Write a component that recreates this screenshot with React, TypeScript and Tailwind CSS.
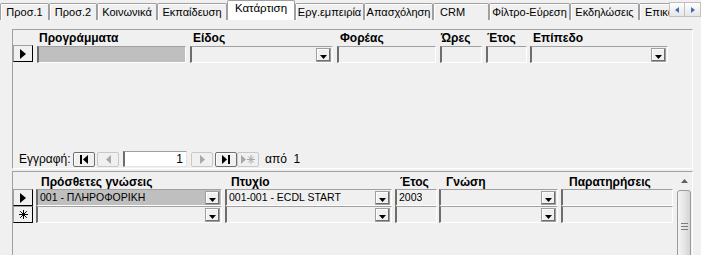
import React from "react";

const tabs = [
  { label: "Προσ.1", cls: "w-[49px]" },
  { label: "Προσ.2", cls: "w-[48px]" },
  { label: "Κοινωνικά", cls: "w-[60px]" },
  { label: "Εκπαίδευση", cls: "w-[70px]" },
  { label: "Κατάρτιση", cls: "w-[68px]", active: true },
  { label: "Εργ.εμπειρία", cls: "w-[69px]" },
  { label: "Απασχόληση", cls: "w-[69px]" },
  { label: "CRM", cls: "w-[56px] justify-start pl-[6px]" },
  { label: "Φίλτρο-Εύρεση", cls: "w-[81px]" },
  { label: "Εκδηλώσεις", cls: "w-[69px]" },
  { label: "Επικοινωνία", cls: "w-[72px] justify-start pl-[5px]" },
];

function Caret() {
  return (
    <svg width="7" height="4" viewBox="0 0 7 4" className="mt-[5px]">
      <path d="M0 0 H7 L3.5 4 Z" fill="#000" />
    </svg>
  );
}

function DropBtn() {
  return (
    <div className="ml-auto mr-[1px] flex h-[14px] w-[15px] shrink-0 items-center justify-center border border-[#a0a0a0] bg-[#f0f0f0] shadow-[inset_-1px_-1px_0_#6d6d6d,inset_1px_1px_0_#fff]">
      <Caret />
    </div>
  );
}

// sunken access text box
function Field({
  w,
  combo,
  selected,
  children,
}: {
  w: string;
  combo?: boolean;
  selected?: boolean;
  children?: React.ReactNode;
}) {
  return (
    <div
      className={`flex h-[17px] shrink-0 items-center border-t border-l-2 border-r border-b border-t-[#a0a0a0] border-l-[#6d6d6d] border-r-white border-b-white pl-[2px] text-[10.5px] leading-none ${w} ${
        selected ? "bg-[#bfbfbf]" : "bg-[#f0f0f0]"
      }`}
    >
      <span className="truncate">{children}</span>
      {combo && <DropBtn />}
    </div>
  );
}

function Selector({ kind }: { kind: "current" | "new" }) {
  return (
    <div className="flex h-[17px] w-[20px] shrink-0 items-center justify-center border-t border-l border-r border-b border-t-[#a0a0a0] border-l-[#a0a0a0] border-r-black border-b-black bg-[#f0f0f0]">
      {kind === "current" ? (
        <svg width="6" height="10" viewBox="0 0 6 10">
          <path d="M0 0 L6 5 L0 10 Z" fill="#000" />
        </svg>
      ) : (
        <svg width="9" height="9" viewBox="0 0 9 9" stroke="#000" strokeWidth="1">
          <path d="M4.5 0 V9 M0 4.5 H9 M1.2 1.2 L7.8 7.8 M7.8 1.2 L1.2 7.8" />
        </svg>
      )}
    </div>
  );
}

function NavBtn({ enabled, children }: { enabled?: boolean; children: React.ReactNode }) {
  return (
    <div
      className={`flex h-[15px] w-[22px] shrink-0 items-center justify-center rounded-[2px] border bg-[#f0f0f0] ${
        enabled ? "border-[#707070] shadow-[inset_1px_1px_0_#fff]" : "border-[#c8c8c8]"
      }`}
    >
      {children}
    </div>
  );
}

export default function App() {
  return (
    <div className="h-[255px] w-[701px] overflow-hidden bg-[#f0f0f0] font-['Liberation_Sans',Arial,sans-serif] text-[12px] text-black">
      {/* tab strip */}
      <div className="flex h-[20px] items-end">
        <div className="flex w-[669px] shrink-0 items-end overflow-hidden text-[11px]">
          {tabs.map((t) => (
            <div
              key={t.label}
              className={`flex shrink-0 items-center justify-center overflow-hidden whitespace-nowrap border-t border-l border-r rounded-t-[2px] ${t.cls} ${
                t.active
                  ? "h-[20px] border-t-[#a0a0a0] border-l-[#a0a0a0] border-r-[#a0a0a0] bg-white pb-[3px] text-[11.5px]"
                  : "h-[17px] border-t-[#a0a0a0] border-l-[#a0a0a0] border-r-[#a0a0a0] bg-[#f0f0f0] pt-[1px] shadow-[inset_1px_1px_0_#fff]"
              }`}
            >
              {t.label}
            </div>
          ))}
        </div>
        <div className="mb-[3px] flex shrink-0">
          <div className="flex h-[15px] w-[16px] items-center justify-center border border-[#c0c0c0] bg-gradient-to-b from-white to-[#e6e6e6]">
            <svg width="4" height="6" viewBox="0 0 4 6">
              <path d="M4 0 L0 3 L4 6 Z" fill="#3f6fb5" />
            </svg>
          </div>
          <div className="flex h-[15px] w-[16px] items-center justify-center border border-l-0 border-[#c0c0c0] bg-gradient-to-b from-white to-[#e6e6e6]">
            <svg width="4" height="6" viewBox="0 0 4 6">
              <path d="M0 0 L4 3 L0 6 Z" fill="#3f6fb5" />
            </svg>
          </div>
        </div>
      </div>

      {/* Προγράμματα subform */}
      <div className="ml-[12px] mt-[9px] flex h-[140px] w-[681px] flex-col border border-[#a0a0a0] border-r-white border-b-white">
        <div className="flex h-[15px] items-end pb-[1px] font-bold leading-none">
          <div className="w-[24px] shrink-0" />
          <div className="w-[153px] shrink-0 pl-[2px]">Προγράμματα</div>
          <div className="w-[147px] shrink-0 pl-[3px]">Είδος</div>
          <div className="w-[103px] shrink-0 pl-[3px]">Φορέας</div>
          <div className="w-[46px] shrink-0 pl-[1px]">Ώρες</div>
          <div className="w-[44px] shrink-0 pl-[1px]">Έτος</div>
          <div className="pl-[3px]">Επίπεδο</div>
        </div>
        <div className="flex items-start">
          <Selector kind="current" />
          <div className="ml-[4px] mt-[1px] flex gap-[4px]">
            <Field w="w-[149px]" selected />
            <Field w="w-[143px]" combo />
            <Field w="w-[99px]" />
            <Field w="w-[42px]" />
            <Field w="w-[41px]" />
            <div className="-ml-[1px]">
              <Field w="w-[138px]" combo />
            </div>
          </div>
        </div>
        <div className="flex-1" />
        {/* navigation buttons */}
        <div className="mb-[1px] flex h-[16px] items-center">
          <span className="ml-[6px] w-[54px] shrink-0">Εγγραφή:</span>
          <NavBtn enabled>
            <svg width="9" height="9" viewBox="0 0 9 9">
              <rect x="0" y="0" width="2" height="9" fill="#000" />
              <path d="M8 0 L3 4.5 L8 9 Z" fill="#000" />
            </svg>
          </NavBtn>
          <div className="ml-[2px]">
            <NavBtn>
              <svg width="5" height="9" viewBox="0 0 5 9">
                <path d="M5 0 L0 4.5 L5 9 Z" fill="#a8a8a8" />
              </svg>
            </NavBtn>
          </div>
          <div className="ml-[4px] flex h-[16px] w-[64px] items-center justify-end border-t border-l-2 border-r border-b border-t-[#a0a0a0] border-l-[#6d6d6d] border-r-[#e3e3e3] border-b-[#e3e3e3] bg-white pr-[3px] leading-none">
            1
          </div>
          <div className="ml-[4px]">
            <NavBtn>
              <svg width="5" height="9" viewBox="0 0 5 9">
                <path d="M0 0 L5 4.5 L0 9 Z" fill="#a8a8a8" />
              </svg>
            </NavBtn>
          </div>
          <div className="ml-[2px]">
            <NavBtn enabled>
              <svg width="9" height="9" viewBox="0 0 9 9">
                <path d="M0 0 L5 4.5 L0 9 Z" fill="#000" />
                <rect x="6" y="0" width="2" height="9" fill="#000" />
              </svg>
            </NavBtn>
          </div>
          <NavBtn>
            <svg width="14" height="9" viewBox="0 0 14 9">
              <path d="M0 0 L5 4.5 L0 9 Z" fill="#a8a8a8" />
              <path d="M10 0 V9 M6 4.5 H14 M7.3 1.5 L12.7 7.5 M12.7 1.5 L7.3 7.5" stroke="#a8a8a8" strokeWidth="1" />
            </svg>
          </NavBtn>
          <span className="ml-[6px]">από&nbsp; 1</span>
        </div>
      </div>

      {/* Πρόσθετες γνώσεις subform */}
      <div className="ml-[12px] mt-[2px] flex h-[90px] w-[681px] border border-[#a0a0a0] border-r-white">
        <div className="w-[663px] shrink-0">
          <div className="flex h-[17px] items-end pb-[1px] font-bold leading-none">
            <div className="w-[27px] shrink-0" />
            <div className="w-[189px] shrink-0 pl-[1px]">Πρόσθετες γνώσεις</div>
            <div className="w-[170px] shrink-0 pl-[2px]">Πτυχίο</div>
            <div className="w-[44px] shrink-0 pl-[1px]">Έτος</div>
            <div className="w-[122px] shrink-0 pl-[3px]">Γνώση</div>
            <div className="pl-[4px]">Παρατηρήσεις</div>
          </div>
          <div className="flex items-start">
            <Selector kind="current" />
            <div className="ml-[3px] flex">
              <Field w="w-[186px]" combo selected>
                001 - ΠΛΗΡΟΦΟΡΙΚΗ
              </Field>
              <div className="ml-[3px]">
                <Field w="w-[167px]" combo>
                  001-001 - ECDL START
                </Field>
              </div>
              <div className="ml-[3px]">
                <Field w="w-[42px]">2003</Field>
              </div>
              <div className="ml-[2px]">
                <Field w="w-[119px]" combo />
              </div>
              <div className="ml-[3px]">
                <Field w="w-[112px]" />
              </div>
            </div>
          </div>
          <div className="flex items-start">
            <Selector kind="new" />
            <div className="ml-[3px] flex">
              <Field w="w-[186px]" combo />
              <div className="ml-[3px]">
                <Field w="w-[167px]" combo />
              </div>
              <div className="ml-[3px]">
                <Field w="w-[42px]" />
              </div>
              <div className="ml-[2px]">
                <Field w="w-[119px]" combo />
              </div>
              <div className="ml-[3px]">
                <Field w="w-[112px]" />
              </div>
            </div>
          </div>
        </div>
        {/* scrollbar */}
        <div className="flex w-[16px] shrink-0 flex-col bg-[#f0f0f0]">
          <div className="flex h-[17px] items-center justify-center">
            <svg width="7" height="4" viewBox="0 0 7 4">
              <path d="M0 4 L3.5 0 L7 4 Z" fill="#606060" />
            </svg>
          </div>
          <div className="mx-[1px] mt-[1px] flex flex-1 items-start justify-center rounded-[3px] border border-[#9a9a9a] bg-gradient-to-r from-[#f4f4f4] via-[#e6e6e6] to-[#d4d4d4] pt-[32px]">
            <svg width="7" height="7" viewBox="0 0 7 7">
              <path d="M0 0.5 H7 M0 3.5 H7 M0 6.5 H7" stroke="#7a7a7a" strokeWidth="1" />
            </svg>
          </div>
        </div>
      </div>
    </div>
  );
}
